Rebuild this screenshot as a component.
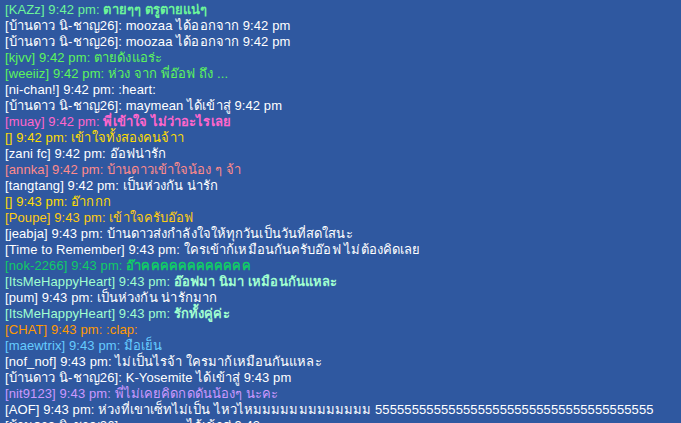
import React from 'react';

const LINES = [
  { name: 'KAZz', time: '9:42 pm:', msg: 'ตายๆๆ ตรูตายแน่ๆ', color: 'text-[#6cf59a]', bold: true },
  { sys: '[บ้านดาว นิ-ชาญ26]: moozaa ได้ออกจาก 9:42 pm' },
  { sys: '[บ้านดาว นิ-ชาญ26]: moozaa ได้ออกจาก 9:42 pm' },
  { name: 'kjvv', time: '9:42 pm:', msg: 'ตายดังแอร่ะ', color: 'text-[#5cf55c]' },
  { name: 'weeiiz', time: '9:42 pm:', msg: 'ห่วง จาก พี่อ๊อฟ ถึง ...', color: 'text-[#5cf55c]' },
  { name: 'ni-chan!', time: '9:42 pm:', msg: ':heart:', color: 'text-white' },
  { sys: '[บ้านดาว นิ-ชาญ26]: maymean ได้เข้าสู่ 9:42 pm' },
  { name: 'muay', time: '9:42 pm:', msg: 'พี่เข้าใจ ไม่ว่าอะไรเลย', color: 'text-[#ff66cc]', bold: true },
  { name: '', time: '9:42 pm:', msg: 'เข้าใจทั้งสองคนจ้าา', color: 'text-[#ffdd00]' },
  { name: 'zani fc', time: '9:42 pm:', msg: 'อ๊อฟน่ารัก', color: 'text-white' },
  { name: 'annka', time: '9:42 pm:', msg: 'บ้านดาวเข้าใจน้อง ๆ จ้า', color: 'text-[#ff8a8a]' },
  { name: 'tangtang', time: '9:42 pm:', msg: 'เป็นห่วงกัน น่ารัก', color: 'text-white' },
  { name: '', time: '9:43 pm:', msg: 'อ๊ากกก', color: 'text-[#ffdd00]' },
  { name: 'Poupe', time: '9:43 pm:', msg: 'เข้าใจครับอ๊อฟ', color: 'text-[#ffcc11]' },
  { name: 'jeabja', time: '9:43 pm:', msg: 'บ้านดาวส่งกำลังใจให้ทุกวันเป็นวันที่สดใสนะ', color: 'text-white' },
  { name: 'Time to Remember', time: '9:43 pm:', msg: 'ใครเข้าก้เหมือนกันครับอ๊อฟ ไม่ต้องคิดเลย', color: 'text-white' },
  { name: 'nok-2266', time: '9:43 pm:', msg: 'อ๊าคคคคคคคคคคคค', color: 'text-[#11cc66]', bold: true },
  { name: 'ItsMeHappyHeart', time: '9:43 pm:', msg: 'อ๊อฟมา นิมา เหมือนกันแหละ', color: 'text-[#a0ffd0]', bold: true },
  { name: 'pum', time: '9:43 pm:', msg: 'เป็นห่วงกัน น่ารักมาก', color: 'text-white' },
  { name: 'ItsMeHappyHeart', time: '9:43 pm:', msg: 'รักทั้งคู่ค่ะ', color: 'text-[#a0ffd0]', bold: true },
  { name: 'CHAT', time: '9:43 pm:', msg: ':clap:', color: 'text-[#ff9900]' },
  { name: 'maewtrix', time: '9:43 pm:', msg: 'มือเย็น', color: 'text-[#66ccff]' },
  { name: 'nof_nof', time: '9:43 pm:', msg: 'ไม่เป็นไรจ้า ใครมาก้เหมือนกันแหละ', color: 'text-white' },
  { sys: '[บ้านดาว นิ-ชาญ26]: K-Yosemite ได้เข้าสู่ 9:43 pm' },
  { name: 'nit9123', time: '9:43 pm:', msg: 'พี่ไม่เคยคิดกดดันน้องๆ นะคะ', color: 'text-[#cc99ff]' },
  { name: 'AOF', time: '9:43 pm:', msg: 'ห่วงที่เขาเซ็ทไม่เป็น ไหวไหมมมมมมมมมมมมม 55555555555555555555555555555555555555', color: 'text-white' },
  { sys: '[บ้านดาว นิ-ชาญ26]: maymean ได้เข้าสู่ 9:43 pm' },
];

export default function App() {
  return (
    <div className="w-[681px] h-[423px] overflow-hidden bg-[#2f58a0] pl-[5px] pt-[2px] text-[13px] leading-[16px] tracking-[0.1px] font-['Liberation_Sans','Noto_Sans',sans-serif]">
      {LINES.map((line, i) =>
        line.sys ? (
          <div key={i} className="whitespace-nowrap text-white">{line.sys}</div>
        ) : (
          <div key={i} className={`whitespace-nowrap ${line.color}`}>
            [{line.name}] {line.time}{' '}
            <span className={line.bold ? 'font-bold' : ''}>{line.msg}</span>
          </div>
        )
      )}
    </div>
  );
}
